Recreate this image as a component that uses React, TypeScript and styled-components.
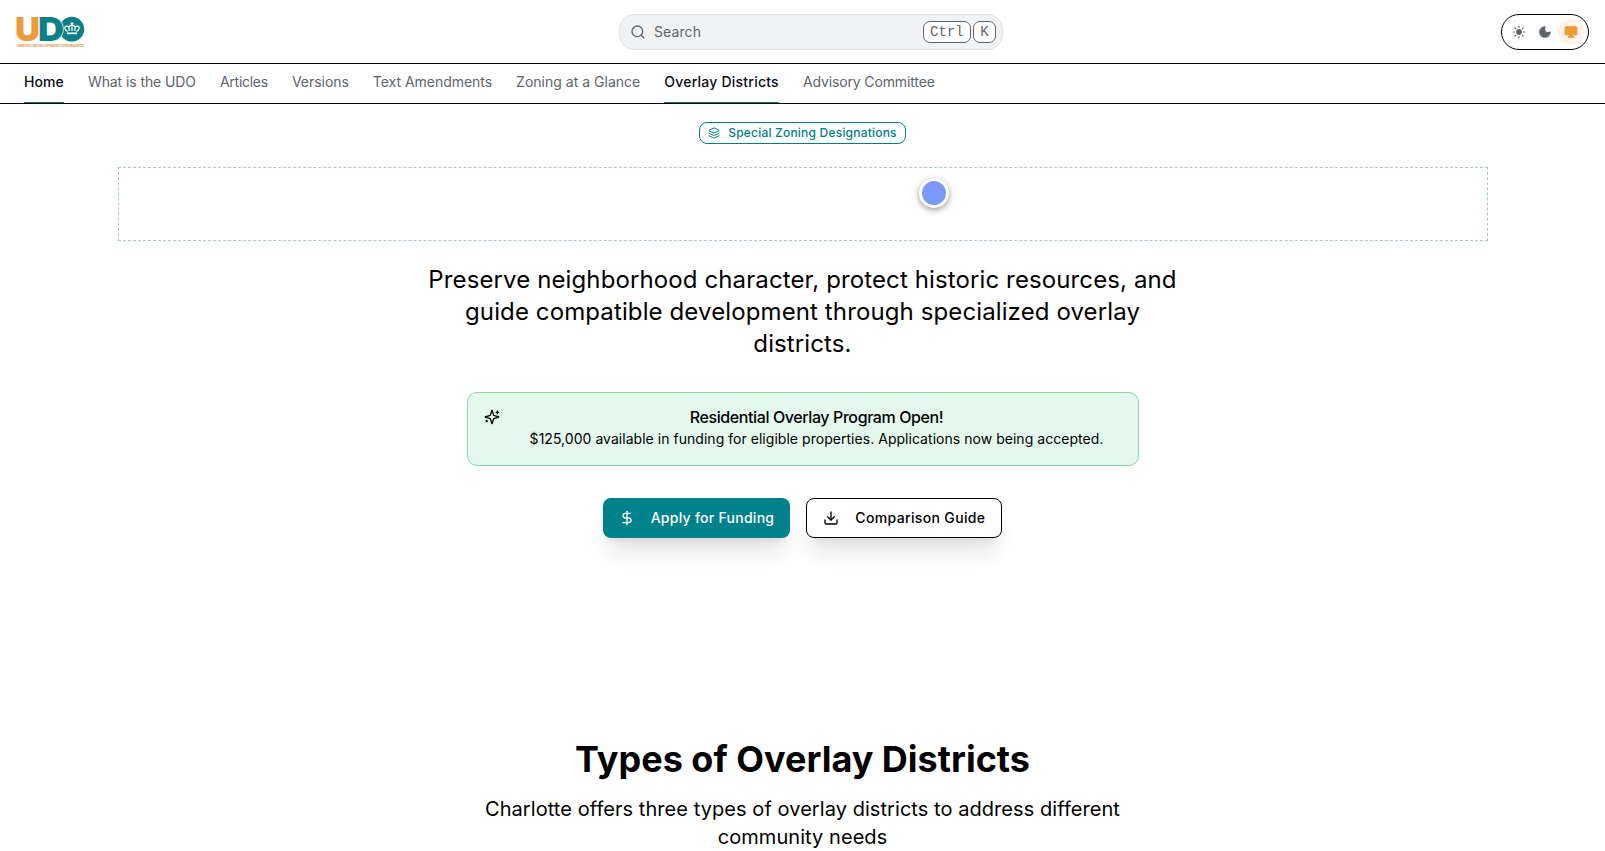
import React from 'react';
import styled, { createGlobalStyle } from 'styled-components';
import { Airplay, DollarSign, Download, Layers, Moon, Search, Sun } from 'lucide-react';

const GlobalStyle = createGlobalStyle`
  *, *::before, *::after { box-sizing: border-box; }
  html, body { margin: 0; height: 851px; overflow: hidden; }
  body {
    background: #fff;
    color: #000;
    font-family: Inter, 'Liberation Sans', sans-serif;
    font-size: 16px;
    line-height: 24px;
  }
  h1, h2, p { margin: 0; }
`;

const Page = styled.div`
  height: 851px;
  overflow: hidden;
`;

const Header = styled.header`
  display: grid;
  grid-template-columns: 603px 384px 1fr;
  align-items: center;
  height: 64px;
  padding: 0 16px;
  border-bottom: 1px solid #000;
`;

const LogoMark = styled.svg`
  display: block;
  overflow: visible;
`;

const SearchBox = styled.button`
  display: flex;
  align-items: center;
  gap: 8px;
  height: 36px;
  padding: 0 6px 0 10px;
  border: 1px solid #e2e3e4;
  border-radius: 15px;
  background: #f1f2f4;
  color: #60646a;
  font: 400 14px/20px Inter, sans-serif;
  letter-spacing: 0.1px;
`;

const Keys = styled.span`
  display: flex;
  gap: 2px;
  margin-left: auto;
  letter-spacing: 0;
`;

const Key = styled.kbd`
  height: 22px;
  padding: 0 6.3px;
  border: 1px solid #60646a;
  border-radius: 7px;
  background: #fff;
  font: 14px/20px 'Liberation Mono', monospace;
`;

const ThemeSwitch = styled.div`
  display: flex;
  justify-self: end;
  width: 88px;
  height: 36px;
  padding: 4px;
  border: 1px solid #000;
  border-radius: 18px;
`;

const ThemeOption = styled.span<{ $active?: boolean }>`
  display: grid;
  place-items: center;
  width: 26px;
  height: 26px;
  border-radius: 50%;
  background: ${(p) => (p.$active ? '#fef3e9' : 'transparent')};
  color: ${(p) => (p.$active ? '#ed9b33' : '#60646a')};
  svg { fill: currentColor; }
`;

const Nav = styled.nav`
  display: flex;
  gap: 24px;
  height: 40px;
  padding: 0 24px;
  border-bottom: 1px solid #000;
`;

const Tab = styled.a<{ $active?: boolean; $tracking: number }>`
  height: 39px;
  padding-top: 8px;
  border-bottom: 1px solid ${(p) => (p.$active ? '#007a78' : 'transparent')};
  color: ${(p) => (p.$active ? '#0a0d12' : '#60646a')};
  font-size: 14px;
  font-weight: ${(p) => (p.$active ? 500 : 400)};
  line-height: 20px;
  letter-spacing: ${(p) => p.$tracking}px;
  white-space: nowrap;
`;

const Hero = styled.section`
  display: flex;
  flex-direction: column;
  align-items: center;
  width: 1370px;
  margin: 0 auto;
  padding-top: 18px;
`;

const Badge = styled.span`
  display: flex;
  align-items: center;
  gap: 8px;
  height: 22px;
  padding: 0 8px;
  border: 1px solid #007f86;
  border-radius: 8px;
  color: #007f86;
  font-size: 12px;
  font-weight: 500;
  line-height: 16px;
  letter-spacing: 0.21px;
`;

const Stage = styled.div`
  position: relative;
  width: 100%;
  height: 74px;
  margin-top: 23px;
  border: 1px dashed #a3cbd4;
`;

const Ball = styled.span`
  position: absolute;
  left: 800px;
  top: 10px;
  width: 30px;
  height: 30px;
  border: 3px solid #fff;
  border-radius: 50%;
  background: #7c98f9;
  box-shadow: 0 2px 6px rgba(0, 0, 0, 0.4);
`;

const Lead = styled.p`
  width: 768px;
  margin-top: 23px;
  font-size: 24px;
  line-height: 32px;
  letter-spacing: 0.115px;
  text-align: center;
`;

const Notice = styled.div`
  display: flex;
  gap: 12px;
  width: 672px;
  height: 74px;
  margin-top: 32px;
  padding: 12px 16px;
  border: 1px solid #7fdcab;
  border-radius: 10px;
  background: #e5f8ed;
  > svg { margin-top: 4px; flex: none; }
`;

const NoticeBody = styled.div`
  flex: 1;
  text-align: center;
`;

const NoticeTitle = styled.p`
  font-weight: 500;
  letter-spacing: -0.4px;
`;

const NoticeText = styled.p`
  font-size: 14px;
  line-height: 20px;
  letter-spacing: 0.035px;
`;

const Actions = styled.div`
  display: flex;
  gap: 16px;
  margin-top: 32px;
`;

const Action = styled.button<{ $primary?: boolean }>`
  display: flex;
  align-items: center;
  gap: 16px;
  height: 40px;
  padding: 0 16px;
  border: ${(p) => (p.$primary ? 'none' : '1px solid #000')};
  border-radius: 8px;
  background: ${(p) => (p.$primary ? '#00828a' : '#fff')};
  color: ${(p) => (p.$primary ? '#fff' : '#000')};
  font: 500 14px/20px Inter, sans-serif;
  letter-spacing: ${(p) => (p.$primary ? 0.27 : 0.35)}px;
  white-space: nowrap;
  box-shadow: 0 20px 25px -5px rgba(0, 0, 0, 0.1), 0 8px 10px -6px rgba(0, 0, 0, 0.1);
`;

const Types = styled.section`
  display: flex;
  flex-direction: column;
  align-items: center;
  margin-top: 201px;
  text-align: center;
`;

const Heading = styled.h2`
  font-size: 36px;
  font-weight: 700;
  line-height: 40px;
`;

const SubHeading = styled.p`
  width: 672px;
  margin-top: 16px;
  font-size: 20px;
  line-height: 28px;
  letter-spacing: 0.06px;
`;

const tabs = [
  { label: 'Home', tracking: 0.1, active: true },
  { label: 'What is the UDO', tracking: -0.09 },
  { label: 'Articles', tracking: -0.27 },
  { label: 'Versions', tracking: -0.03 },
  { label: 'Text Amendments', tracking: -0.03 },
  { label: 'Zoning at a Glance', tracking: 0.01 },
  { label: 'Overlay Districts', tracking: 0.23, active: true },
  { label: 'Advisory Committee', tracking: -0.13 },
];

const Logo = () => (
  <LogoMark width="70" height="32" viewBox="0 0 70 32">
    <circle cx="55.8" cy="13.2" r="12.4" fill="#0d7f88" />
    <g fontFamily="Inter, sans-serif" fontWeight="900" fontSize="33">
      <text x="-0.9" y="25.3" fill="#ed9b3f" textLength="25" lengthAdjust="spacingAndGlyphs">U</text>
      <text x="22" y="25.3" fill="#0d7f88" stroke="#fff" strokeWidth="1.2" paintOrder="stroke" textLength="26" lengthAdjust="spacingAndGlyphs">D</text>
    </g>
    <g fill="none" stroke="#fff" strokeWidth="1.2">
      <path d="M51.500 15.500 C46.500 12 49.500 8.500 53 11 V15 M60.500 15.500 C65.500 12 62.500 8.500 59 11 V15 M56 8 V15 M53 11 C54 8.300 58 8.300 59 11" />
      <path d="M51 17.300 H61" strokeWidth="1.8" />
      <path d="M54.500 7.300 H57.500 M56 6 V9" strokeWidth="1" />
    </g>
    <text x="0.700" y="30.700" fill="#ed9b3f" fontFamily="Inter, sans-serif" fontWeight="700" fontSize="3.400" textLength="67.500" lengthAdjust="spacingAndGlyphs">UNIFIED DEVELOPMENT ORDINANCE</text>
  </LogoMark>
);

const SparklesIcon = () => (
  <svg width="16" height="16" viewBox="0 0 24 24" fill="none" stroke="currentColor" strokeWidth="2" strokeLinecap="round" strokeLinejoin="round">
    <path d="M9.937 15.5A2 2 0 0 0 8.5 14.063l-6.135-1.582a.5.5 0 0 1 0-.962L8.5 9.936A2 2 0 0 0 9.937 8.5l1.582-6.135a.5.5 0 0 1 .963 0L14.063 8.5A2 2 0 0 0 15.5 9.937l6.135 1.581a.5.5 0 0 1 0 .964L15.5 14.063a2 2 0 0 0-1.437 1.437l-1.582 6.135a.5.5 0 0 1-.963 0z" />
    <path d="M20 3v4M22 5h-4M4 17v2M5 18H3" />
  </svg>
);

export default function App() {
  return (
    <Page>
      <GlobalStyle />
      <Header>
        <Logo />
        <SearchBox>
          <Search size={16} />
          Search
          <Keys><Key>Ctrl</Key><Key>K</Key></Keys>
        </SearchBox>
        <ThemeSwitch>
          <ThemeOption><Sun size={14} /></ThemeOption>
          <ThemeOption><Moon size={14} /></ThemeOption>
          <ThemeOption $active><Airplay size={14} /></ThemeOption>
        </ThemeSwitch>
      </Header>
      <Nav>
        {tabs.map((tab) => (
          <Tab key={tab.label} $active={tab.active} $tracking={tab.tracking}>{tab.label}</Tab>
        ))}
      </Nav>
      <Hero>
        <Badge><Layers size={12} strokeWidth={2} />Special Zoning Designations</Badge>
        <Stage><Ball /></Stage>
        <Lead>
          Preserve neighborhood character, protect historic resources, and guide compatible
          development through specialized overlay districts.
        </Lead>
        <Notice>
          <SparklesIcon />
          <NoticeBody>
            <NoticeTitle>Residential Overlay Program Open!</NoticeTitle>
            <NoticeText>$125,000 available in funding for eligible properties. Applications now being accepted.</NoticeText>
          </NoticeBody>
        </Notice>
        <Actions>
          <Action $primary><DollarSign size={16} />Apply for Funding</Action>
          <Action><Download size={16} />Comparison Guide</Action>
        </Actions>
      </Hero>
      <Types>
        <Heading>Types of Overlay Districts</Heading>
        <SubHeading>Charlotte offers three types of overlay districts to address different community needs</SubHeading>
      </Types>
    </Page>
  );
}
